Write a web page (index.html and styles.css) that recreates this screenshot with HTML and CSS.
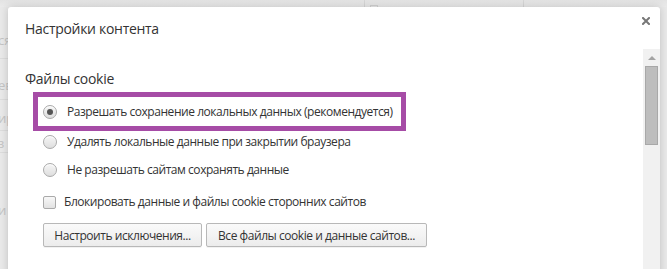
FILE: index.html
```html
<!DOCTYPE html>
<html lang="ru">
<head>
    <meta charset="UTF-8">
    <meta name="viewport" content="width=device-width, initial-scale=1.0">
    <title>Настройки контента</title>
    <link rel="stylesheet" href="styles.css">
</head>
<body>
    <div class="page">
        <div class="page-top">
            <span class="tab-line first"></span>
            <span class="tab-box"></span>
            <span class="tab-line second"></span>
        </div>
        <div class="page-list">
            <div class="page-row r1"><span>ся</span></div>
            <div class="page-row r2"><span>ев</span></div>
            <div class="page-row r3"><span>ир</span></div>
            <div class="page-row r4"><span>з</span></div>
            <div class="page-row r5"><span>и н</span></div>
        </div>
    </div>

    <div class="dialog">
        <div class="dialog-header">
            <h1 class="dialog-title">Настройки контента</h1>
            <button class="close-btn" aria-label="Закрыть">
                <svg width="8" height="8" viewBox="0 0 8 8">
                    <path d="M1 1 L7 7 M7 1 L1 7" stroke="#777" stroke-width="2" stroke-linecap="square"/>
                </svg>
            </button>
        </div>

        <div class="dialog-body">
            <div class="dialog-content">
                <h2 class="section-title">Файлы cookie</h2>

                <div class="highlight">
                    <label class="option">
                        <span class="radio checked"></span>
                        Разрешать сохранение локальных данных (рекомендуется)
                    </label>
                </div>

                <label class="option second">
                    <span class="radio"></span>
                    Удалять локальные данные при закрытии браузера
                </label>

                <label class="option third">
                    <span class="radio"></span>
                    Не разрешать сайтам сохранять данные
                </label>

                <label class="option check-row">
                    <span class="checkbox"></span>
                    Блокировать данные и файлы cookie сторонних сайтов
                </label>

                <div class="button-row">
                    <button class="btn btn-exceptions">Настроить исключения...</button>
                    <button class="btn btn-all">Все файлы cookie и данные сайтов...</button>
                </div>
            </div>

            <div class="scrollbar">
                <span class="scroll-arrow"></span>
                <span class="scroll-thumb"></span>
            </div>
        </div>
    </div>
</body>
</html>
```

FILE: styles.css
```css
body {
    margin: 0;
    padding: 0;
    width: 667px;
    height: 269px;
    overflow: hidden;
    background: #e9e9e9;
    font-family: 'Open Sans', 'Noto Sans', sans-serif;
    color: #333;
    position: relative;
}

/* dimmed page behind the dialog */
.page {
    height: 269px;
}

.page-top {
    height: 7px;
    background: linear-gradient(#e3e3e3, #ebebeb);
    position: relative;
}

.tab-line {
    position: absolute;
    top: 0;
    width: 1px;
    height: 7px;
    background: #d6d6d6;
}

.tab-line.first {
    left: 364px;
}

.tab-line.second {
    left: 523px;
}

.tab-box {
    position: absolute;
    left: 370px;
    top: 5px;
    width: 6px;
    height: 2px;
    border: 1px solid #d2d2d2;
    border-bottom: none;
}

.page-list {
    width: 40px;
    font-size: 13px;
    line-height: 16px;
    color: #c4c4c4;
}

.page-row {
    box-sizing: border-box;
    border-bottom: 1px solid #dcdcdc;
}

.page-row.r1 { height: 52px; padding-top: 25px; }
.page-row.r2 { height: 41px; padding-top: 18px; }
.page-row.r3 { height: 31px; padding-top: 10px; }
.page-row.r4 { height: 22px; padding-top: 4px; }
.page-row.r5 { height: 100px; padding-top: 49px; border-bottom: none; }

.page-row span {
    margin-left: -2px;
}

/* dialog */
.dialog {
    position: absolute;
    left: 8px;
    top: 7px;
    width: 652px;
    height: 300px;
    background: #fff;
    border-radius: 3px;
    box-shadow: 0 0 8px rgba(0, 0, 0, 0.18);
}

.dialog-header {
    height: 42px;
    display: flex;
    justify-content: space-between;
    align-items: flex-start;
    padding: 0 10px 0 17px;
    box-sizing: border-box;
}

.dialog-title {
    margin: 12px 0 0;
    font-size: 14px;
    font-weight: normal;
    line-height: 20px;
    letter-spacing: -0.3px;
    color: #333;
}

.close-btn {
    margin-top: 10px;
    width: 8px;
    height: 8px;
    padding: 0;
    border: none;
    background: none;
    display: flex;
}

.dialog-body {
    display: flex;
    height: 258px;
}

.dialog-content {
    flex: 1;
    padding-left: 17px;
    font-size: 12px;
    letter-spacing: -0.45px;
}

.section-title {
    margin: 20px 0 0;
    font-size: 14px;
    font-weight: normal;
    line-height: 20px;
    letter-spacing: -0.3px;
    color: #333;
}

.highlight {
    margin: 3px 0 0 8px;
    width: 373px;
    height: 39px;
    box-sizing: border-box;
    border: 5px solid #a64ca6;
    display: flex;
    align-items: center;
    padding-left: 5px;
}

.option {
    display: flex;
    align-items: center;
    height: 22px;
    line-height: 22px;
    gap: 10px;
    white-space: nowrap;
}

.option.second,
.option.third,
.option.check-row {
    padding-left: 18px;
}

.option.third {
    margin-top: 6px;
}

.option.check-row {
    margin-top: 10px;
    gap: 8px;
}

.radio {
    width: 14px;
    height: 14px;
    box-sizing: border-box;
    border-radius: 50%;
    border: 1px solid #a9a9a9;
    background: linear-gradient(#f6f6f6, #dedede);
    box-shadow: inset 0 1px 0 #fff;
    display: flex;
    align-items: center;
    justify-content: center;
    flex-shrink: 0;
}

.radio.checked::after {
    content: '';
    width: 6px;
    height: 6px;
    border-radius: 50%;
    background: #555;
}

.checkbox {
    width: 13px;
    height: 13px;
    box-sizing: border-box;
    border: 1px solid #aaa;
    border-radius: 2px;
    background: linear-gradient(#f8f8f8, #e2e2e2);
    flex-shrink: 0;
}

.button-row {
    display: flex;
    gap: 4px;
    margin-top: 10px;
    padding-left: 18px;
}

.btn {
    height: 24px;
    padding: 0 10px;
    box-sizing: border-box;
    border: 1px solid #b8b8b8;
    border-radius: 2px;
    background: linear-gradient(#fafafa, #ececec);
    box-shadow: 0 1px 0 rgba(0, 0, 0, 0.05);
    font-family: 'Open Sans', 'Noto Sans', sans-serif;
    font-size: 12px;
    letter-spacing: -0.45px;
    color: #333;
    white-space: nowrap;
}

.btn-exceptions {
    width: 159px;
}

.btn-all {
    width: 221px;
}

.scrollbar {
    width: 17px;
    background: #f1f1f1;
    display: flex;
    flex-direction: column;
    align-items: center;
    border-bottom-right-radius: 3px;
}

.scroll-arrow {
    margin-top: 7px;
    width: 0;
    height: 0;
    border-left: 4px solid transparent;
    border-right: 4px solid transparent;
    border-bottom: 4px solid #a3a3a3;
}

.scroll-thumb {
    margin-top: 6px;
    width: 13px;
    height: 79px;
    box-sizing: border-box;
    background: #bdbdbd;
    border: 1px solid #a8a8a8;
}
```
